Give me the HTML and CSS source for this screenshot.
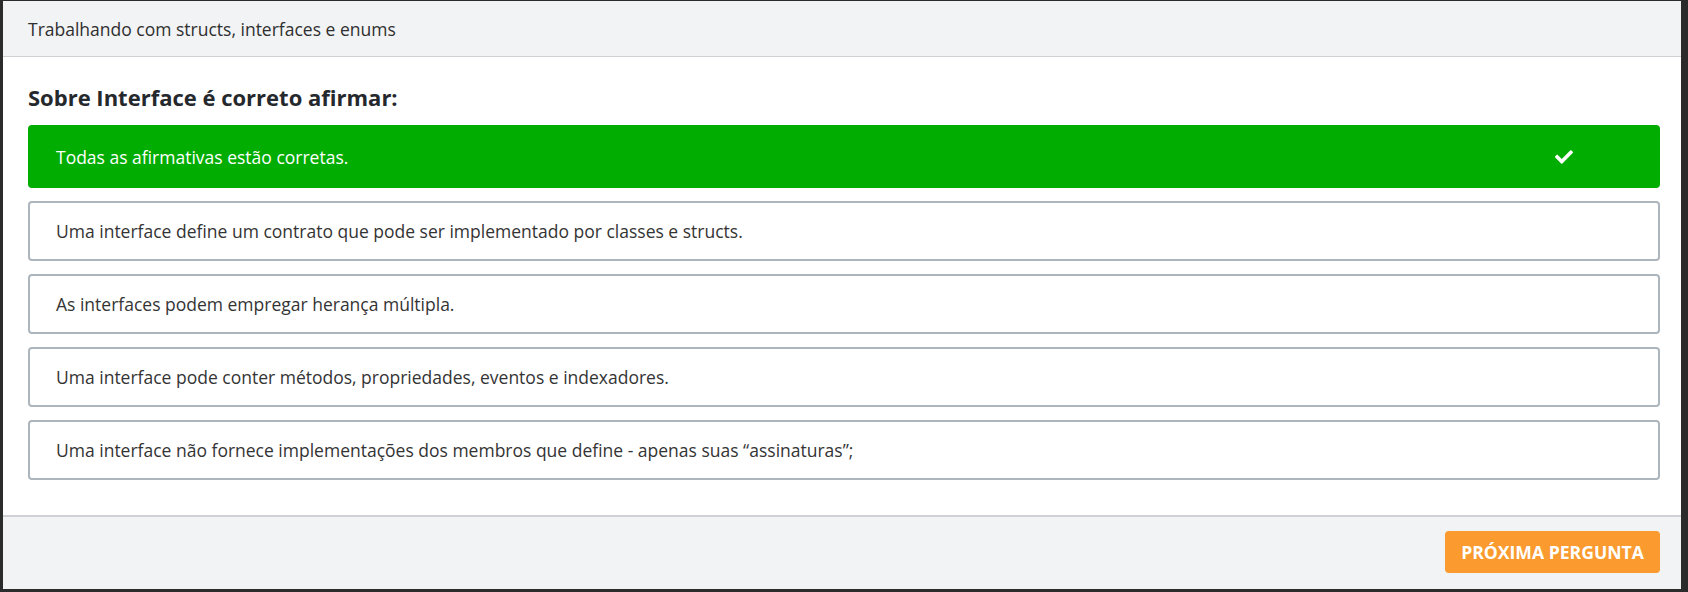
FILE: index.html
```html
<!DOCTYPE html>
<html lang="pt-BR">
<head>
<meta charset="utf-8">
<title>Quiz</title>
<link rel="stylesheet" href="styles.css">
</head>
<body>
<div class="card">
  <div class="card-header">Trabalhando com structs, interfaces e enums</div>
  <div class="card-body">
    <h2 class="question">Sobre Interface é correto afirmar:</h2>
    <ul class="options">
      <li class="option correct">
        <span>Todas as afirmativas estão corretas.</span>
        <svg class="check" viewBox="0 60 512 392" width="18" height="14"><path fill="#fff" d="M173.898 439.404l-166.4-166.4c-9.997-9.997-9.997-26.206 0-36.204l36.203-36.204c9.997-9.998 26.207-9.998 36.204 0L192 312.69 432.095 72.596c9.997-9.997 26.207-9.997 36.204 0l36.203 36.204c9.997 9.997 9.997 26.206 0 36.204l-294.4 294.401c-9.998 9.997-26.207 9.997-36.204-.001z"/></svg>
      </li>
      <li class="option">Uma interface define um contrato que pode ser implementado por classes e structs.</li>
      <li class="option">As interfaces podem empregar herança múltipla.</li>
      <li class="option">Uma interface pode conter métodos, propriedades, eventos e indexadores.</li>
      <li class="option">Uma interface não fornece implementações dos membros que define - apenas suas “assinaturas”;</li>
    </ul>
  </div>
  <div class="card-footer">
    <button class="btn-next">PRÓXIMA PERGUNTA</button>
  </div>
</div>
</body>
</html>
```

FILE: styles.css
```css
html, body {
  margin: 0;
  padding: 0;
}
body {
  background: #2b2b2b;
  padding: 1px 7px 3px 3px;
  font-family: "Open Sans", "Liberation Sans", sans-serif;
  height: 592px;
  box-sizing: border-box;
}
.card {
  background: #fff;
  height: 588px;
  display: flex;
  flex-direction: column;
}
.card-header {
  background: #f2f3f5;
  border-bottom: 1px solid #cfd1d5;
  height: 55px;
  display: flex;
  align-items: center;
  padding: 0 25px;
  font-size: 17.5px;
  color: #2f2f2f;
  flex: none;
}
.card-body {
  padding: 28px 21px 35px 25px;
  flex: 1;
}
.question {
  margin: 0 0 16px;
  font-size: 22px;
  line-height: 24px;
  font-weight: 700;
  color: #25282c;
}
.options {
  list-style: none;
  margin: 0;
  padding: 0;
  display: flex;
  flex-direction: column;
  gap: 13px;
}
.option {
  box-sizing: border-box;
  height: 60px;
  border: 2px solid #adb5bd;
  border-radius: 4px;
  padding: 0 26px;
  display: flex;
  align-items: center;
  font-size: 17.5px;
  color: #343434;
}
.option.correct {
  height: 63px;
  border: none;
  background: #02ad02;
  color: #fff;
  padding: 0 87px 0 28px;
  justify-content: space-between;
}
.check {
  display: block;
}
.card-footer {
  background: #f2f3f5;
  border-top: 2px solid #cfd1d5;
  height: 74px;
  flex: none;
  display: flex;
  justify-content: flex-end;
  align-items: flex-start;
  padding: 14px 21px 0 0;
  box-sizing: border-box;
}
.btn-next {
  height: 42px;
  width: 215px;
  border: none;
  border-radius: 4px;
  background: #fb9a2e;
  color: #fff;
  font-family: "Open Sans", "Liberation Sans", sans-serif;
  font-weight: 700;
  font-size: 17.6px;
  padding: 0;
}
```
